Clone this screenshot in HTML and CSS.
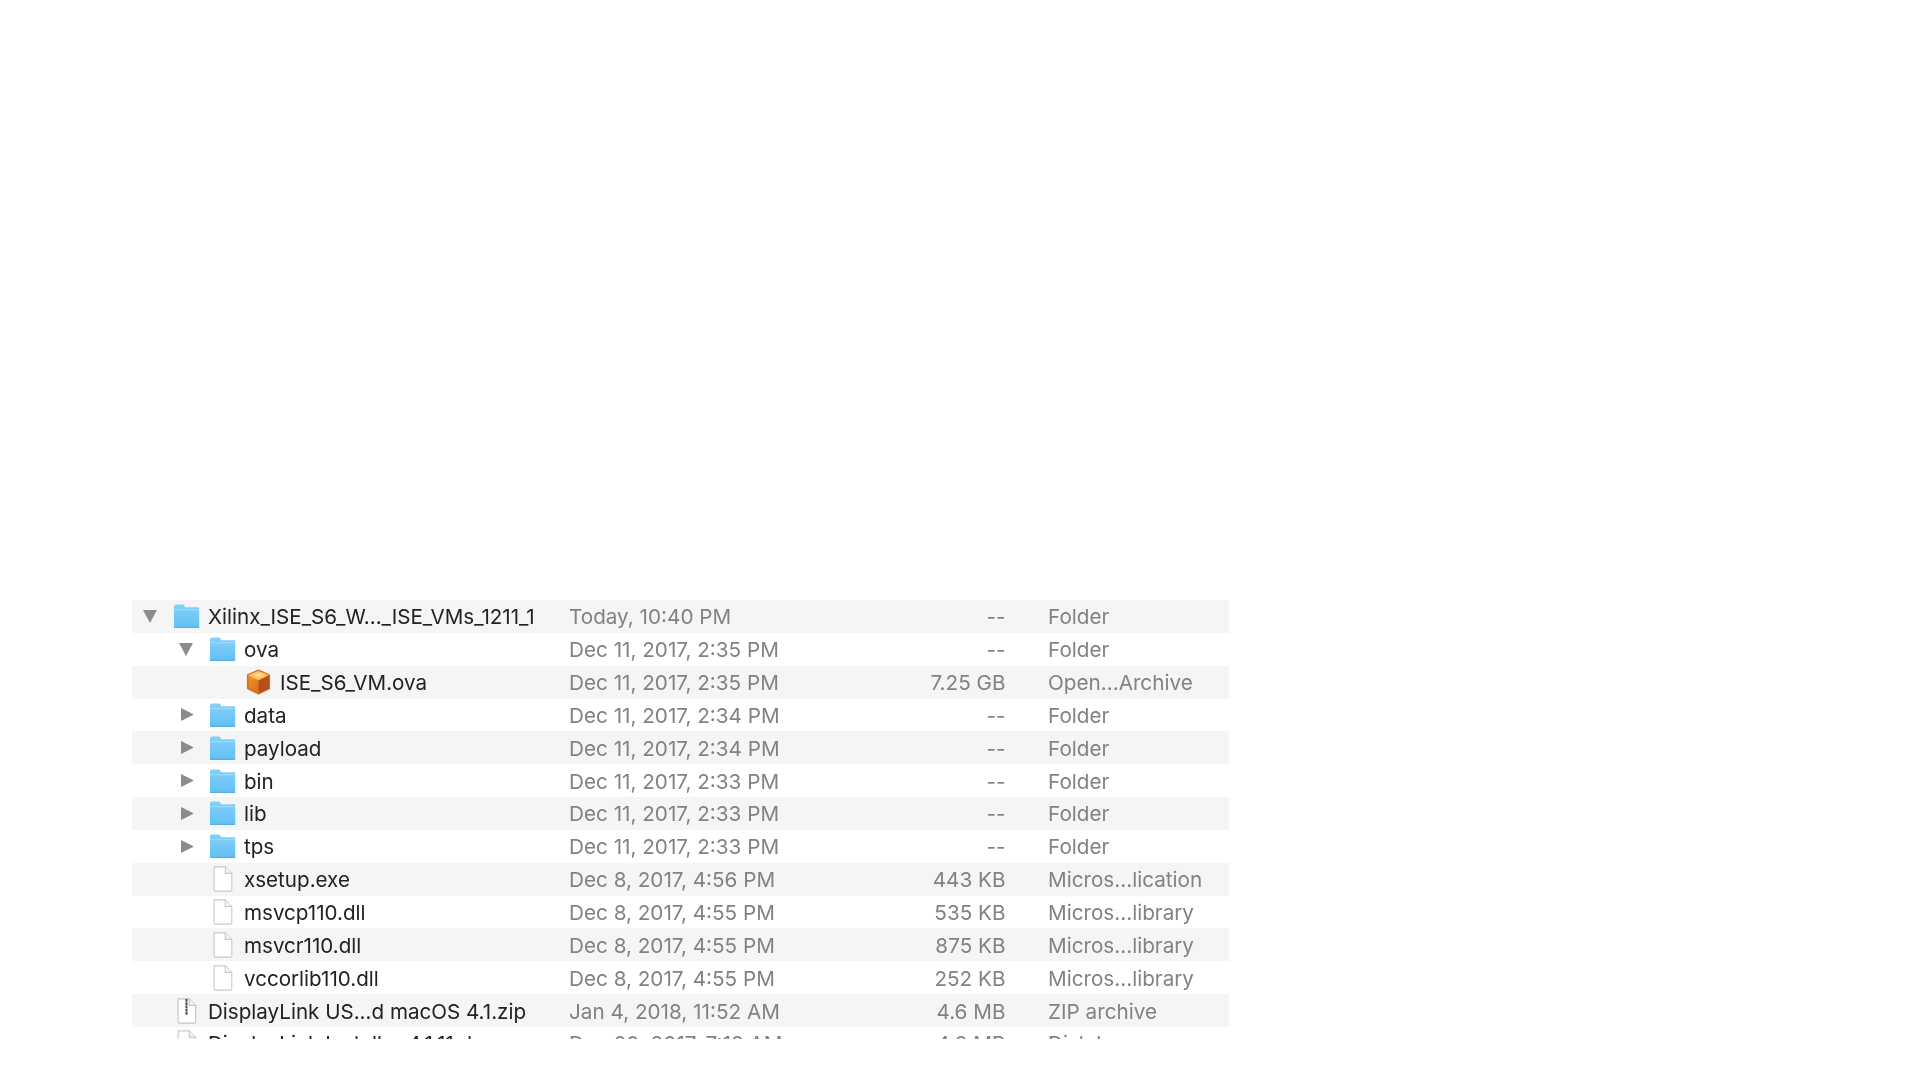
FILE: index.html
```html
<!DOCTYPE html>
<html lang="en">
<head>
  <meta charset="UTF-8" />
  <title>Finder list</title>
  <link rel="stylesheet" href="styles.css">
</head>
<body>
<svg class="defs" width="0" height="0">
  <defs>
    <linearGradient id="fold" x1="0" y1="0" x2="0" y2="1"><stop offset="0" stop-color="#84d0f9"/><stop offset="1" stop-color="#62c0f4"/></linearGradient>
    <linearGradient id="boxl" x1="0" y1="0" x2="1" y2="1"><stop offset="0" stop-color="#f39a2c"/><stop offset="1" stop-color="#c9601c"/></linearGradient>
    <radialGradient id="boxt" cx="0.5" cy="0.45" r="0.6"><stop offset="0" stop-color="#ffe2a0"/><stop offset="1" stop-color="#f59f2e"/></radialGradient>
    <symbol id="folder" viewBox="0 0 28 26">
      <path d="M1 3.500C1 2 1.800 1 3 1h7c1 0 1.600.6 2 1.500L12.600 4H26c.8 0 1.200.5 1.200 1.200V24c0 .7-.4 1.200-1.200 1.200H2c-.7 0-1-.5-1-1.200z" fill="url(#fold)"/>
      <path d="M1 6.500h26.200" stroke="#a2dffc" stroke-width="1" fill="none"/>
      <path d="M1 24.700h26.200" stroke="#4aa7dc" stroke-width="1" fill="none"/>
    </symbol>
    <symbol id="file" viewBox="0 0 22 28">
      <path d="M2 1h12l7 7v17.500c0 .9-.6 1.500-1.500 1.500h-16C2.600 27 2 26.400 2 25.500z" fill="#fff" stroke="#c9c9c9" stroke-width="1.200"/>
      <path d="M14 1v7h7" fill="#f4f4f4" stroke="#c9c9c9" stroke-width="1.200"/>
    </symbol>
    <symbol id="zip" viewBox="0 0 22 28">
      <path d="M2 1h12l7 7v17.500c0 .9-.6 1.500-1.500 1.500h-16C2.600 27 2 26.400 2 25.500z" fill="#fff" stroke="#c4c4c4" stroke-width="1.200"/>
      <path d="M14 1v7h7" fill="#f4f4f4" stroke="#c4c4c4" stroke-width="1.200"/>
      <path d="M11 1v17" stroke="#4a4a4a" stroke-width="2.200" stroke-dasharray="3 .5" fill="none"/>
    </symbol>
    <symbol id="box" viewBox="0 0 28 28">
      <path d="M14 1.500l11.500 5v14.500L14 26.500 2.500 21V6.500z" fill="url(#boxl)" stroke="#d9741f" stroke-width="2" stroke-linejoin="round"/>
      <path d="M14 2l11.500 4.700L14 12.500 2.500 6.700z" fill="url(#boxt)"/>
      <path d="M14 12.500l11.500-5.800v14.300L14 26.500z" fill="#b5501a"/>
    </symbol>
  </defs>
</svg>

<div class="list">

  <div class="row">
    <div class="name lvl0"><span class="tri down"></span><svg class="ico"><use href="#folder"/></svg><span class="txt">Xilinx_ISE_S6_W..._ISE_VMs_1211_1</span></div>
    <div class="date">Today, 10:40 PM</div><div class="size">--</div><div class="kind">Folder</div>
  </div>
  <div class="row">
    <div class="name lvl1"><span class="tri down"></span><svg class="ico"><use href="#folder"/></svg><span class="txt">ova</span></div>
    <div class="date">Dec 11, 2017, 2:35 PM</div><div class="size">--</div><div class="kind">Folder</div>
  </div>
  <div class="row">
    <div class="name lvl2"><span class="tri none"></span><svg class="ico"><use href="#box"/></svg><span class="txt">ISE_S6_VM.ova</span></div>
    <div class="date">Dec 11, 2017, 2:35 PM</div><div class="size">7.25 GB</div><div class="kind">Open...Archive</div>
  </div>
  <div class="row">
    <div class="name lvl1"><span class="tri right"></span><svg class="ico"><use href="#folder"/></svg><span class="txt">data</span></div>
    <div class="date">Dec 11, 2017, 2:34 PM</div><div class="size">--</div><div class="kind">Folder</div>
  </div>
  <div class="row">
    <div class="name lvl1"><span class="tri right"></span><svg class="ico"><use href="#folder"/></svg><span class="txt">payload</span></div>
    <div class="date">Dec 11, 2017, 2:34 PM</div><div class="size">--</div><div class="kind">Folder</div>
  </div>
  <div class="row">
    <div class="name lvl1"><span class="tri right"></span><svg class="ico"><use href="#folder"/></svg><span class="txt">bin</span></div>
    <div class="date">Dec 11, 2017, 2:33 PM</div><div class="size">--</div><div class="kind">Folder</div>
  </div>
  <div class="row">
    <div class="name lvl1"><span class="tri right"></span><svg class="ico"><use href="#folder"/></svg><span class="txt">lib</span></div>
    <div class="date">Dec 11, 2017, 2:33 PM</div><div class="size">--</div><div class="kind">Folder</div>
  </div>
  <div class="row">
    <div class="name lvl1"><span class="tri right"></span><svg class="ico"><use href="#folder"/></svg><span class="txt">tps</span></div>
    <div class="date">Dec 11, 2017, 2:33 PM</div><div class="size">--</div><div class="kind">Folder</div>
  </div>
  <div class="row">
    <div class="name lvl1"><span class="tri none"></span><svg class="ico"><use href="#file"/></svg><span class="txt">xsetup.exe</span></div>
    <div class="date">Dec 8, 2017, 4:56 PM</div><div class="size">443 KB</div><div class="kind">Micros...lication</div>
  </div>
  <div class="row">
    <div class="name lvl1"><span class="tri none"></span><svg class="ico"><use href="#file"/></svg><span class="txt">msvcp110.dll</span></div>
    <div class="date">Dec 8, 2017, 4:55 PM</div><div class="size">535 KB</div><div class="kind">Micros...library</div>
  </div>
  <div class="row">
    <div class="name lvl1"><span class="tri none"></span><svg class="ico"><use href="#file"/></svg><span class="txt">msvcr110.dll</span></div>
    <div class="date">Dec 8, 2017, 4:55 PM</div><div class="size">875 KB</div><div class="kind">Micros...library</div>
  </div>
  <div class="row">
    <div class="name lvl1"><span class="tri none"></span><svg class="ico"><use href="#file"/></svg><span class="txt">vccorlib110.dll</span></div>
    <div class="date">Dec 8, 2017, 4:55 PM</div><div class="size">252 KB</div><div class="kind">Micros...library</div>
  </div>
  <div class="row">
    <div class="name lvl0"><span class="tri none"></span><svg class="ico"><use href="#zip"/></svg><span class="txt">DisplayLink US...d macOS 4.1.zip</span></div>
    <div class="date">Jan 4, 2018, 11:52 AM</div><div class="size">4.6 MB</div><div class="kind">ZIP archive</div>
  </div>
  <div class="row">
    <div class="name lvl0"><span class="tri none"></span><svg class="ico"><use href="#file"/></svg><span class="txt">DisplayLink Installer 4.1.11.d</span></div>
    <div class="date">Dec 20, 2017, 7:18 AM</div><div class="size">4.8 MB</div><div class="kind">Disk Image</div>
  </div>

</div>
</body>
</html>
```

FILE: styles.css
```css
html, body { margin: 0; background: #fff; }
body { height: 1080px; overflow: hidden; padding: 600px 0 0 132px; box-sizing: border-box; font-family: Inter, "Liberation Sans", sans-serif; font-size: 20.7px; }
.defs { display: block; height: 0; }
.list { width: 1097px; height: 439px; overflow: hidden; filter: blur(0.7px); }
.row { display: grid; grid-template-columns: 437px 230px 206.500px 1fr; align-items: center; height: 32.85px; color: #828282; }
.row:nth-child(odd) { background: #f5f5f5; }
.name { display: flex; align-items: center; color: #222; white-space: nowrap; font-size: 20.6px; }
.txt, .date, .size, .kind { padding-top: 1px; }
.lvl0 { padding-left: 11px; }
.lvl1 { padding-left: 47px; }
.lvl2 { padding-left: 83px; }
.tri { flex: none; box-sizing: border-box; }
.tri.none { width: 30px; }
.tri.down { border-left: 7px solid transparent; border-right: 7px solid transparent; border-top: 13px solid #8c8c8c; width: 14px; height: 13px; margin-right: 16px; }
.tri.right { border-top: 6.500px solid transparent; border-bottom: 6.500px solid transparent; border-left: 12px solid #8c8c8c; width: 12px; height: 13px; margin: 0 16px 0 2px; }
.ico { width: 27px; height: 26px; flex: none; margin-right: 8px; }
.size { text-align: right; }
.kind { padding-left: 42.500px; }
```
